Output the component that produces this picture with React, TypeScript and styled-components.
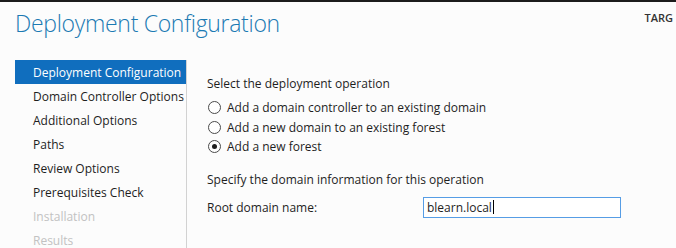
import styled, { createGlobalStyle } from "styled-components";

const steps = [
  { label: "Deployment Configuration", state: "active" },
  { label: "Domain Controller Options", state: "normal" },
  { label: "Additional Options", state: "normal" },
  { label: "Paths", state: "normal" },
  { label: "Review Options", state: "normal" },
  { label: "Prerequisites Check", state: "normal" },
  { label: "Installation", state: "disabled" },
  { label: "Results", state: "disabled" },
] as const;

const operations = [
  { label: "Add a domain controller to an existing domain", checked: false },
  { label: "Add a new domain to an existing forest", checked: false },
  { label: "Add a new forest", checked: true },
];

export default function App() {
  return (
    <>
      <GlobalStyle />
      <Window>
        <Header>
          <Title>Deployment Configuration</Title>
          <ServerName>TARG</ServerName>
        </Header>
        <Body>
          <StepList>
            {steps.map((step) => (
              <Step key={step.label} state={step.state}>
                {step.label}
              </Step>
            ))}
          </StepList>
          <Content>
            <SectionLabel>Select the deployment operation</SectionLabel>
            <RadioGroup>
              {operations.map((op) => (
                <RadioRow key={op.label}>
                  <Radio type="radio" name="op" checked={op.checked} readOnly />
                  {op.label}
                </RadioRow>
              ))}
            </RadioGroup>
            <SectionLabel spaced>Specify the domain information for this operation</SectionLabel>
            <FieldRow>
              <FieldLabel>Root domain name:</FieldLabel>
              <TextBox>
                blearn.local
                <Caret />
              </TextBox>
            </FieldRow>
          </Content>
        </Body>
      </Window>
    </>
  );
}

const GlobalStyle = createGlobalStyle`
  html, body {
    margin: 0;
    padding: 0;
    background: #fcfcfc;
  }

  body {
    font-family: "Open Sans", "Noto Sans", sans-serif;
    font-size: 12px;
    color: #1e1e1e;
  }
`;

const Window = styled.div`
  width: 676px;
  height: 248px;
  overflow: hidden;
  border-top: 2px solid #1c1c1c;
  box-sizing: border-box;
  background: #fcfcfc;
`;

const Header = styled.div`
  height: 58px;
  display: flex;
  justify-content: space-between;
  align-items: flex-start;
  white-space: nowrap;
`;

const Title = styled.h1`
  margin: 0;
  padding: 5px 0 0 15px;
  font-size: 23px;
  line-height: 32px;
  letter-spacing: -0.3px;
  font-weight: 300;
  color: #1b7ab3;
`;

const ServerName = styled.div`
  padding: 8px 3px 0 0;
  font-size: 11px;
  font-weight: 600;
  color: #333;
`;

const Body = styled.div`
  display: grid;
  grid-template-columns: 187px 1fr;
`;

const StepList = styled.ul`
  list-style: none;
  margin: 0;
  padding: 0 0 0 15px;
  border-right: 1px solid #d2d2d2;
`;

const Step = styled.li<{ state: "active" | "normal" | "disabled" }>`
  height: 24px;
  width: 171px;
  padding: 2px 0 0 18px;
  box-sizing: border-box;
  line-height: 22px;
  white-space: nowrap;
  background: ${(p) => (p.state === "active" ? "#106ebe" : "transparent")};
  color: ${(p) =>
    p.state === "active" ? "#ffffff" : p.state === "disabled" ? "#c2c2c2" : "#1e1e1e"};
`;

const Content = styled.div`
  padding: 16px 0 0 20px;
  display: flex;
  flex-direction: column;
`;

const SectionLabel = styled.div<{ spaced?: boolean }>`
  line-height: 16px;
  margin-top: ${(p) => (p.spaced ? "15px" : "0")};
`;

const RadioGroup = styled.div`
  margin-top: 6px;
  display: flex;
  flex-direction: column;
`;

const RadioRow = styled.label`
  height: 19.5px;
  display: flex;
  align-items: center;
  gap: 6px;
`;

const Radio = styled.input`
  appearance: none;
  margin: 0 0 0 1px;
  width: 13px;
  height: 13px;
  border: 1px solid #4a4a4a;
  border-radius: 50%;
  background: #fff;
  box-sizing: border-box;
  display: grid;
  place-content: center;

  &:checked::before {
    content: "";
    width: 5px;
    height: 5px;
    border-radius: 50%;
    background: #1e1e1e;
  }
`;

const FieldRow = styled.div`
  margin-top: 9px;
  display: flex;
  align-items: center;
`;

const FieldLabel = styled.div`
  width: 216px;
`;

const TextBox = styled.div`
  width: 198px;
  height: 21px;
  box-sizing: border-box;
  border: 1px solid #569de5;
  background: #fff;
  padding-left: 3px;
  display: flex;
  align-items: center;
  font-size: 12px;
`;

const Caret = styled.span`
  width: 1px;
  height: 14px;
  background: #000;
  margin-left: 1px;
`;
